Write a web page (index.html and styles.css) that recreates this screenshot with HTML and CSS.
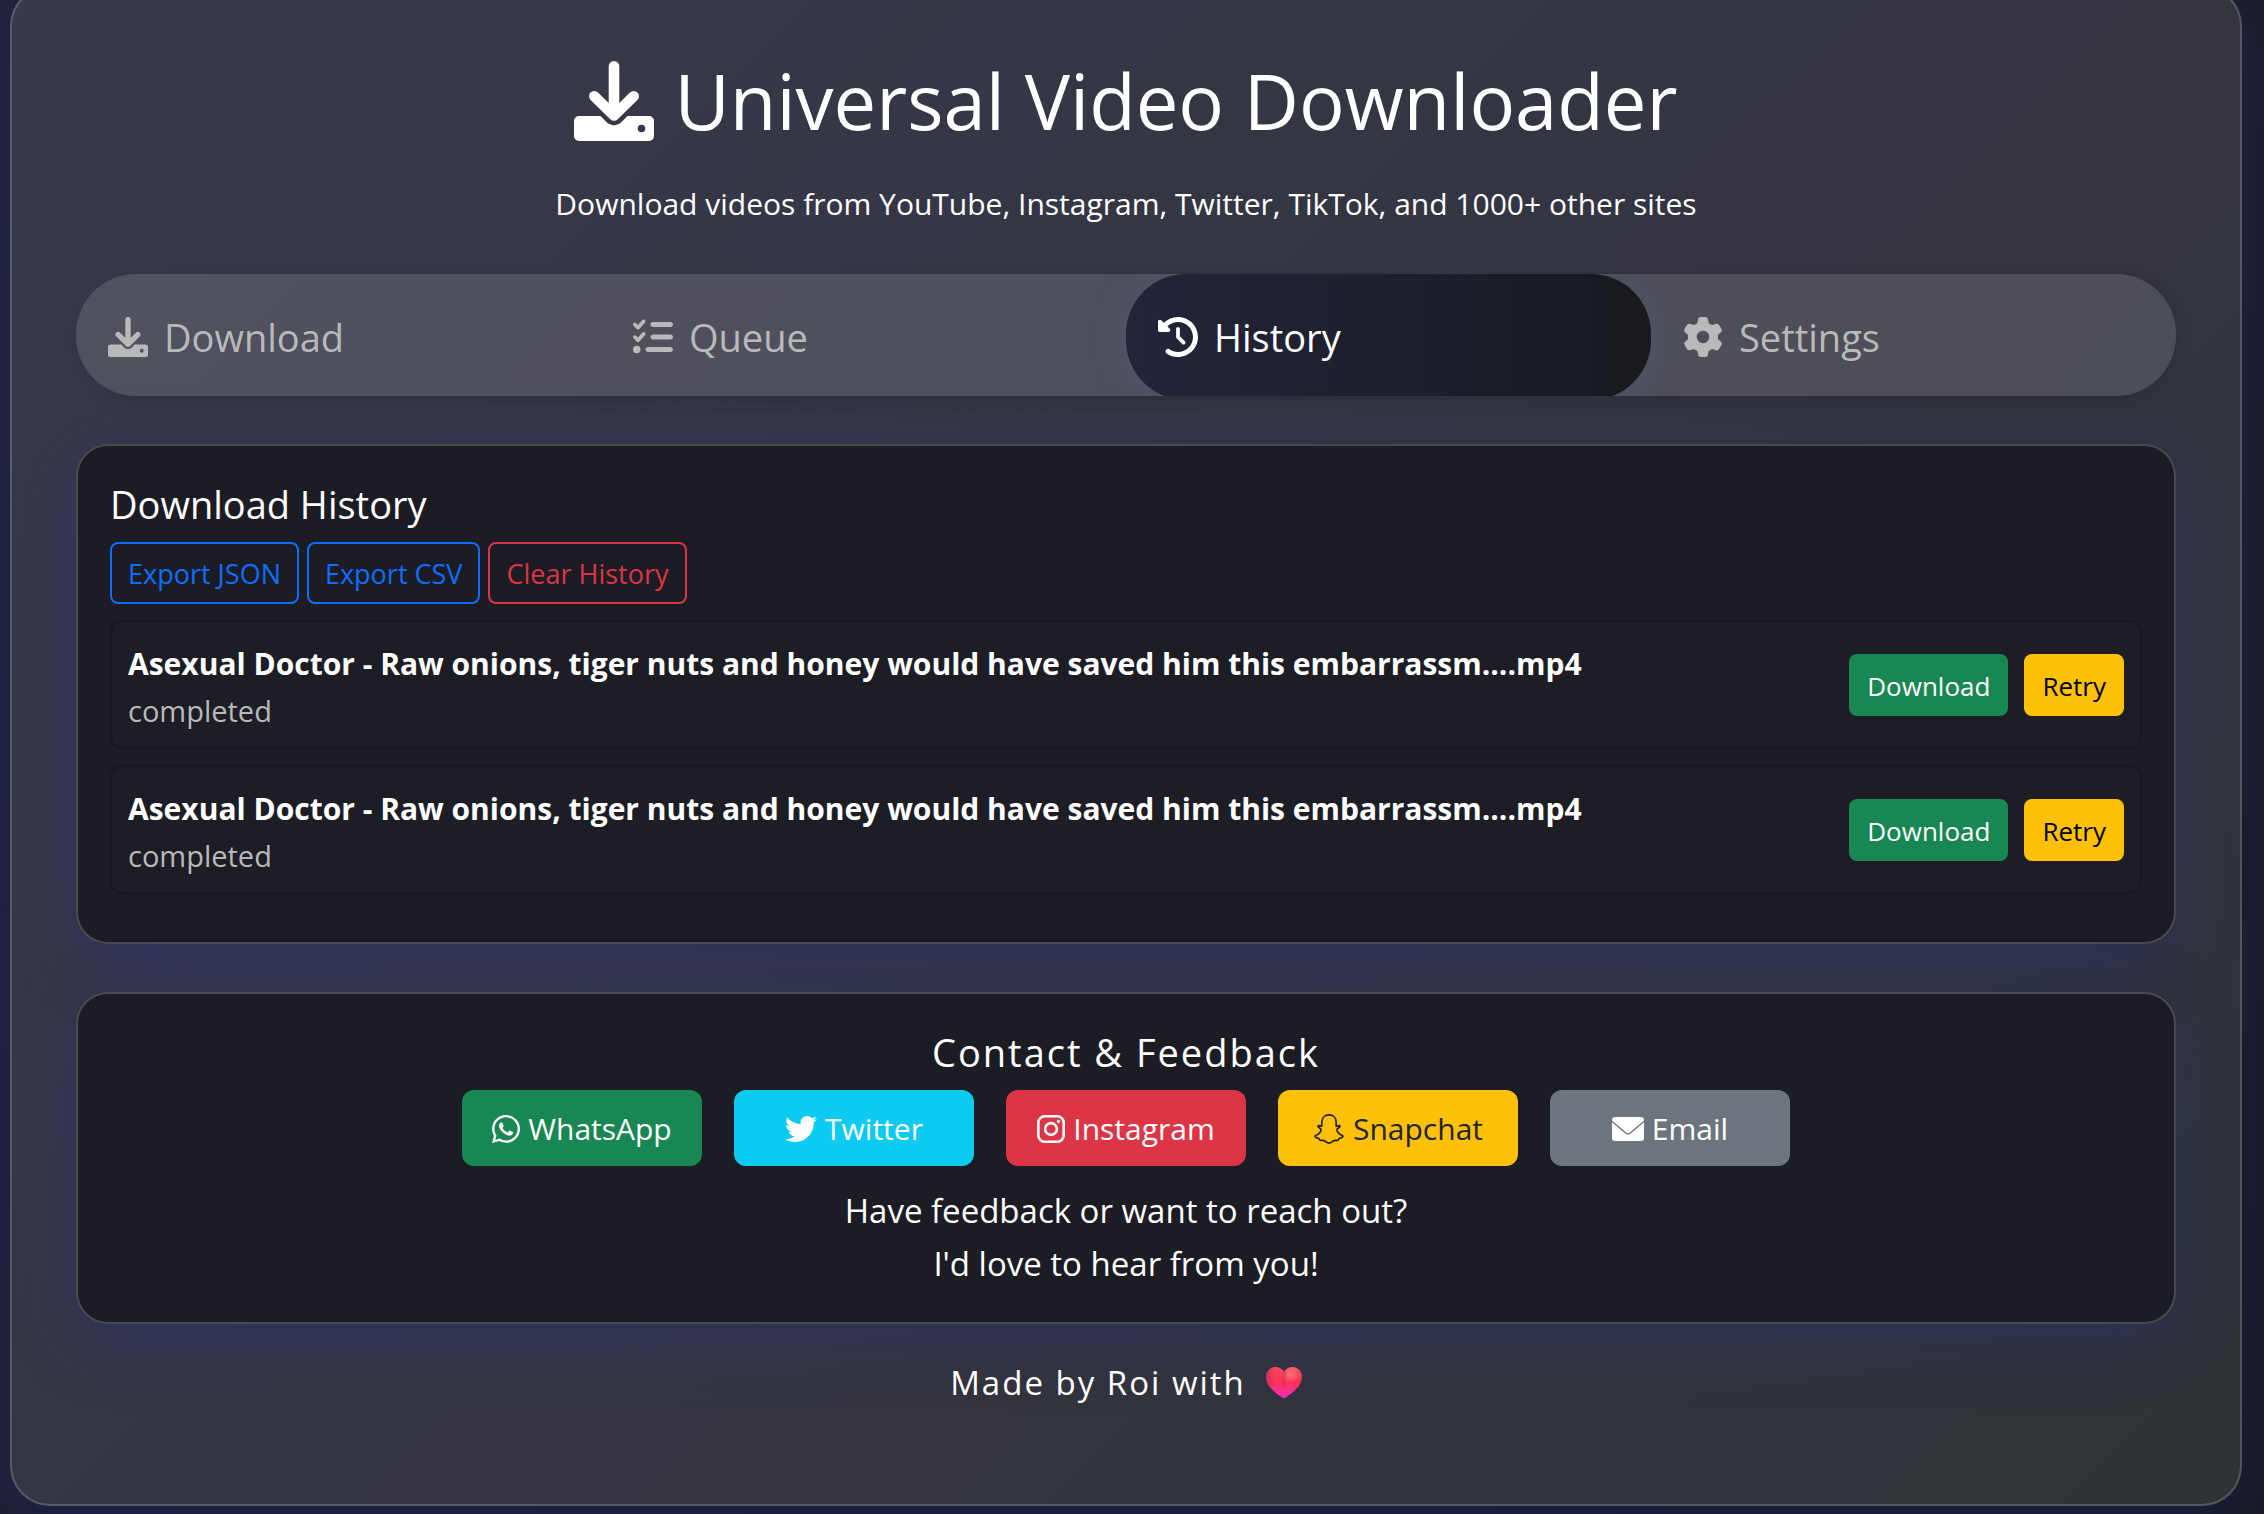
FILE: index.html
```html
<!DOCTYPE html>
<html lang="en">
<head>
<meta charset="utf-8">
<meta name="viewport" content="width=device-width, initial-scale=1">
<title>Universal Video Downloader</title>
<link rel="stylesheet" href="styles.css">
</head>
<body>
<svg class="sprite" aria-hidden="true">
  <symbol id="i-download" viewBox="0 0 80 80">
    <path fill="none" stroke="currentColor" stroke-width="10.6" stroke-linecap="round" stroke-linejoin="round" d="M40 5.300V54.500M20.300 35.300 40 54.500 59.700 35.300"/>
    <path fill="currentColor" fill-rule="evenodd" d="M5 55H26.500L32.500 61C36.700 65.200 43.300 65.200 47.500 61L53.500 55H75a5 5 0 0 1 5 5V75a5 5 0 0 1-5 5H5a5 5 0 0 1-5-5V60a5 5 0 0 1 5-5ZM67.500 63.700a3.800 3.800 0 1 0 0 7.600 3.800 3.800 0 1 0 0-7.600Z"/>
  </symbol>
  <symbol id="i-queue" viewBox="0 0 512 512">
    <path fill="currentColor" d="M152.100 38.200c9.900 8.900 10.700 24 1.800 33.900l-72 80c-4.400 4.900-10.600 7.800-17.200 7.900s-12.900-2.400-17.600-7L7 113C-2.300 103.600-2.300 88.400 7 79s24.600-9.400 33.900 0l22.100 22.100 55.100-61.200c8.900-9.900 24-10.700 33.900-1.800zm0 160c9.900 8.900 10.700 24 1.800 33.900l-72 80c-4.400 4.900-10.600 7.800-17.200 7.900s-12.900-2.400-17.600-7L7 273c-9.400-9.400-9.400-24.600 0-33.900s24.600-9.400 33.900 0l22.100 22.100 55.100-61.200c8.900-9.900 24-10.700 33.900-1.800zM224 96c0-17.700 14.300-32 32-32H480c17.700 0 32 14.300 32 32s-14.300 32-32 32H256c-17.700 0-32-14.300-32-32zm0 160c0-17.700 14.300-32 32-32H480c17.700 0 32 14.300 32 32s-14.300 32-32 32H256c-17.700 0-32-14.300-32-32zM160 416c0-17.700 14.300-32 32-32H480c17.700 0 32 14.300 32 32s-14.300 32-32 32H192c-17.700 0-32-14.300-32-32zM48 368a48 48 0 1 1 0 96 48 48 0 1 1 0-96z"/>
  </symbol>
  <symbol id="i-history" viewBox="0 0 512 512">
    <path fill="currentColor" d="M75 75L41 41C25.900 25.900 0 36.600 0 57.900V168c0 13.300 10.700 24 24 24H134.100c21.400 0 32.100-25.900 17-41l-30.800-30.800C155 85.500 203 64 256 64c106 0 192 86 192 192s-86 192-192 192c-40.800 0-78.600-12.700-109.700-34.400c-14.500-10.100-34.400-6.600-44.600 7.900s-6.600 34.400 7.900 44.600C151.200 495 201.700 512 256 512c141.400 0 256-114.600 256-256S397.400 0 256 0C185.300 0 121.300 28.700 75 75zm181 53c-13.300 0-24 10.700-24 24V256c0 6.400 2.500 12.500 7 17l72 72c9.400 9.400 24.600 9.400 33.900 0s9.400-24.600 0-33.900l-65-65V152c0-13.300-10.700-24-24-24z"/>
  </symbol>
  <symbol id="i-settings" viewBox="0 0 512 512">
    <path fill="currentColor" d="M495.900 166.600c3.200 8.700 .5 18.400-6.400 24.600l-43.300 39.400c1.100 8.300 1.700 16.800 1.700 25.400s-.6 17.100-1.700 25.400l43.300 39.400c6.900 6.200 9.600 15.900 6.400 24.600c-4.400 11.900-9.700 23.300-15.800 34.300l-4.700 8.100c-6.600 11-14 21.400-22.100 31.200c-5.900 7.200-15.700 9.600-24.500 6.800l-55.700-17.700c-13.400 10.300-28.200 18.900-44 25.400l-12.500 57.100c-2 9.100-9 16.300-18.200 17.800c-13.800 2.300-28 3.500-42.500 3.500s-28.700-1.200-42.500-3.500c-9.200-1.500-16.200-8.700-18.200-17.800l-12.500-57.100c-15.800-6.500-30.600-15.100-44-25.400L83.100 425.900c-8.800 2.800-18.600 .3-24.500-6.800c-8.100-9.800-15.500-20.200-22.100-31.200l-4.700-8.100c-6.100-11-11.400-22.400-15.800-34.300c-3.200-8.700-.5-18.400 6.400-24.600l43.300-39.400C64.600 273.100 64 264.600 64 256s.6-17.100 1.700-25.400L22.400 191.200c-6.900-6.200-9.600-15.900-6.400-24.600c4.400-11.900 9.700-23.300 15.800-34.300l4.700-8.100c6.600-11 14-21.400 22.100-31.200c5.900-7.200 15.700-9.600 24.500-6.800l55.700 17.700c13.400-10.300 28.200-18.900 44-25.400l12.500-57.100c2-9.100 9-16.300 18.200-17.800C227.300 1.200 241.500 0 256 0s28.700 1.200 42.500 3.500c9.200 1.500 16.200 8.700 18.200 17.800l12.500 57.100c15.800 6.500 30.600 15.100 44 25.400l55.700-17.700c8.800-2.800 18.600-.3 24.500 6.800c8.100 9.800 15.500 20.200 22.100 31.200l4.700 8.100c6.100 11 11.400 22.400 15.800 34.300zM256 336a80 80 0 1 0 0-160 80 80 0 1 0 0 160z"/>
  </symbol>
  <symbol id="i-whatsapp" viewBox="0 32 448 448">
    <path fill="currentColor" d="M380.900 97.100C339 55.100 283.200 32 223.900 32c-122.400 0-222 99.600-222 222 0 39.100 10.200 77.300 29.600 111L0 480l117.700-30.900c32.400 17.700 68.900 27 106.100 27h.1c122.300 0 224.100-99.600 224.100-222 0-59.300-25.200-115-67.100-157zm-157 341.600c-33.200 0-65.700-8.900-94-25.700l-6.700-4-69.800 18.300L72 359.200l-4.400-7c-18.500-29.400-28.200-63.300-28.200-98.200 0-101.700 82.800-184.500 184.600-184.500 49.300 0 95.600 19.200 130.400 54.100 34.800 34.900 56.200 81.200 56.100 130.500 0 101.800-84.900 184.600-186.600 184.600zm101.200-138.200c-5.500-2.800-32.800-16.200-37.900-18-5.100-1.900-8.800-2.800-12.500 2.800-3.700 5.600-14.300 18-17.600 21.800-3.200 3.700-6.500 4.200-12 1.400-32.600-16.300-54-29.100-75.500-66-5.700-9.800 5.700-9.100 16.300-30.300 1.800-3.700 .9-6.900-.5-9.700-1.400-2.800-12.500-30.100-17.100-41.200-4.500-10.800-9.100-9.300-12.500-9.500-3.200-.2-6.900-.2-10.600-.2-3.700 0-9.700 1.400-14.800 6.900-5.100 5.600-19.400 19-19.400 46.300 0 27.300 19.900 53.700 22.600 57.400 2.800 3.700 39.100 59.700 94.800 83.800 35.200 15.200 49 16.500 66.600 13.900 10.700-1.600 32.800-13.400 37.400-26.400 4.600-13 4.600-24.100 3.200-26.400-1.300-2.500-5-3.900-10.500-6.600z"/>
  </symbol>
  <symbol id="i-twitter" viewBox="0 32 512 448">
    <path fill="currentColor" d="M459.370 151.716c.325 4.548.325 9.097.325 13.645 0 138.720-105.583 298.558-298.558 298.558-59.452 0-114.680-17.219-161.137-47.106 8.447.974 16.568 1.299 25.340 1.299 49.055 0 94.213-16.568 130.274-44.832-46.132-.975-84.792-31.188-98.112-72.772 6.498.974 12.995 1.624 19.818 1.624 9.421 0 18.843-1.300 27.614-3.573-48.081-9.747-84.143-51.980-84.143-102.985v-1.299c13.969 7.797 30.214 12.670 47.431 13.319-28.264-18.843-46.781-51.005-46.781-87.391 0-19.492 5.197-37.360 14.294-52.954 51.655 63.675 129.300 105.258 216.365 109.807-1.624-7.797-2.599-15.918-2.599-24.040 0-57.828 46.782-104.934 104.934-104.934 30.213 0 57.502 12.670 76.670 33.137 23.715-4.548 46.456-13.320 66.599-25.340-7.798 24.366-24.366 44.833-46.132 57.827 21.117-2.273 41.584-8.122 60.426-16.243-14.292 20.791-32.161 39.308-52.628 54.253z"/>
  </symbol>
  <symbol id="i-instagram" viewBox="0 0 28 28">
    <rect x="1.300" y="1.300" width="25.400" height="25.400" rx="6.500" fill="none" stroke="currentColor" stroke-width="2.600"/>
    <circle cx="14" cy="14" r="5.900" fill="none" stroke="currentColor" stroke-width="2.600"/>
    <circle cx="21.500" cy="6.500" r="1.700" fill="currentColor"/>
  </symbol>
  <symbol id="i-snapchat" viewBox="0 0 30 30">
    <path fill="none" stroke="currentColor" stroke-width="1.700" stroke-linejoin="round" d="M15 .9C10.500 .9 7.800 4 7.800 8.200V12C6.500 12.400 5 11 3.900 11.900C3.200 13.300 6.200 14 6.900 15C7.800 17 5 20.500 1.200 21.700C.2 22.800 2.600 24 4.800 24.500C5.600 25 5 26.300 6.400 26.400C8 26.500 9.300 25.900 10.900 27C12.300 28 13.200 29.100 15 29.100C16.800 29.100 17.700 28 19.100 27C20.700 25.900 22 26.500 23.600 26.400C25 26.300 24.400 25 25.200 24.500C27.400 24 29.800 22.800 28.800 21.700C25 20.500 22.200 17 23.100 15C23.800 14 26.800 13.300 26.100 11.900C25 11 23.500 12.400 22.200 12V8.200C22.200 4 19.500 .9 15 .9Z"/>
  </symbol>
  <symbol id="i-email" viewBox="0 0 32 24">
    <path fill="currentColor" d="M3 0H29a3 3 0 0 1 3 3V3.500L17.800 15.600a3 3 0 0 1-3.600 0L0 3.500V3A3 3 0 0 1 3 0Z"/>
    <path fill="currentColor" d="M0 5.200 13.300 16.600a4.200 4.200 0 0 0 5.400 0L32 5.200V21a3 3 0 0 1-3 3H3a3 3 0 0 1-3-3Z"/>
  </symbol>
</svg>

<main class="shell">
  <header class="header">
    <h1 class="title"><svg class="title-icon" aria-hidden="true"><use href="#i-download"/></svg>Universal Video Downloader</h1>
    <p class="subtitle">Download videos from YouTube, Instagram, Twitter, TikTok, and 1000+ other sites</p>
  </header>

  <nav class="tabs" aria-label="Sections">
    <a class="tab" href="#download"><svg class="tab-icon" aria-hidden="true"><use href="#i-download"/></svg>Download</a>
    <a class="tab" href="#queue"><svg class="tab-icon" aria-hidden="true"><use href="#i-queue"/></svg>Queue</a>
    <a class="tab tab-active" href="#history" aria-current="page"><svg class="tab-icon" aria-hidden="true"><use href="#i-history"/></svg>History</a>
    <a class="tab" href="#settings"><svg class="tab-icon" aria-hidden="true"><use href="#i-settings"/></svg>Settings</a>
  </nav>

  <section class="card" id="history">
    <h2 class="card-title">Download History</h2>
    <div class="toolbar">
      <button class="btn btn-outline-blue" type="button">Export JSON</button>
      <button class="btn btn-outline-blue" type="button">Export CSV</button>
      <button class="btn btn-outline-red" type="button">Clear History</button>
    </div>
    <ul class="items">
      <li class="item">
        <div class="item-info">
          <strong class="item-name">Asexual Doctor - Raw onions, tiger nuts and honey would have saved him this embarrassm....mp4</strong>
          <span class="item-status">completed</span>
        </div>
        <div class="item-actions">
          <button class="btn btn-green" type="button">Download</button>
          <button class="btn btn-yellow" type="button">Retry</button>
        </div>
      </li>
      <li class="item">
        <div class="item-info">
          <strong class="item-name">Asexual Doctor - Raw onions, tiger nuts and honey would have saved him this embarrassm....mp4</strong>
          <span class="item-status">completed</span>
        </div>
        <div class="item-actions">
          <button class="btn btn-green" type="button">Download</button>
          <button class="btn btn-yellow" type="button">Retry</button>
        </div>
      </li>
    </ul>
  </section>

  <section class="card contact">
    <h2 class="card-title spaced">Contact &amp; Feedback</h2>
    <div class="socials">
      <a class="social whatsapp" href="#whatsapp"><svg class="icon-28" aria-hidden="true"><use href="#i-whatsapp"/></svg>WhatsApp</a>
      <a class="social twitter" href="#twitter"><svg class="icon-32" aria-hidden="true"><use href="#i-twitter"/></svg>Twitter</a>
      <a class="social instagram" href="#instagram"><svg class="icon-28" aria-hidden="true"><use href="#i-instagram"/></svg>Instagram</a>
      <a class="social snapchat" href="#snapchat"><svg class="icon-32" aria-hidden="true"><use href="#i-snapchat"/></svg>Snapchat</a>
      <a class="social email" href="#email"><svg class="icon-32" aria-hidden="true"><use href="#i-email"/></svg>Email</a>
    </div>
    <p class="note">Have feedback or want to reach out?<br>I'd love to hear from you!</p>
  </section>

  <footer class="footer">Made by Roi with
    <svg class="heart" viewBox="0 0 36 31" role="img" aria-label="love">
      <defs>
        <linearGradient id="heart-fill" x1="0" y1="0" x2="0" y2="1">
          <stop offset="0" stop-color="#f8475b"/>
          <stop offset=".5" stop-color="#fa3157"/>
          <stop offset="1" stop-color="#f52ec0"/>
        </linearGradient>
        <radialGradient id="heart-light" cx=".68" cy=".22" r=".3">
          <stop offset="0" stop-color="#ff7078"/>
          <stop offset="1" stop-color="#ff7078" stop-opacity="0"/>
        </radialGradient>
        <linearGradient id="heart-shade">
          <stop offset="0" stop-color="#b02a58" stop-opacity=".6"/>
          <stop offset=".25" stop-color="#b02a58" stop-opacity="0"/>
          <stop offset=".42" stop-color="#b01f45" stop-opacity="0"/>
          <stop offset=".5" stop-color="#b01f45" stop-opacity=".4"/>
          <stop offset=".58" stop-color="#b01f45" stop-opacity="0"/>
        </linearGradient>
      </defs>
      <path fill="url(#heart-fill)" d="M18 4.500C15.500 1.200 12.500 0 9.500 0C4 0 0 4.300 0 10C0 18.500 8 25 16.200 30.400a3.300 3.300 0 0 0 3.600 0C28 25 36 18.500 36 10C36 4.300 32 0 26.500 0C23.500 0 20.500 1.200 18 4.500Z"/>
      <path fill="url(#heart-light)" d="M18 4.500C15.500 1.200 12.500 0 9.500 0C4 0 0 4.300 0 10C0 18.500 8 25 16.200 30.400a3.300 3.300 0 0 0 3.600 0C28 25 36 18.500 36 10C36 4.300 32 0 26.500 0C23.500 0 20.500 1.200 18 4.500Z"/>
      <path fill="url(#heart-shade)" d="M18 4.500C15.500 1.200 12.500 0 9.500 0C4 0 0 4.300 0 10C0 14 2 17 4 20H32C34 17 36 14 36 10C36 4.300 32 0 26.500 0C23.500 0 20.500 1.200 18 4.500Z"/>
    </svg>
  </footer>
</main>
</body>
</html>
```

FILE: styles.css
```css
* {
  box-sizing: border-box;
}

body {
  display: flex;
  flex-direction: column;
  min-height: 100vh;
  margin: 0;
  padding: 0 22px 8px 10px;
  background: linear-gradient(135deg, #232338, #181b20);
  color: #fff;
  font-family: "Open Sans", "Noto Sans", sans-serif;
  font-size: 30px;
  line-height: 48px;
}

h1,
h2,
p,
ul {
  margin: 0;
  padding: 0;
  font-weight: 400;
}

a {
  text-decoration: none;
}

.sprite {
  display: none;
}

.shell {
  flex: 1;
  margin-top: -14px;
  padding: 64px;
  border: 2px solid rgba(255, 255, 255, .18);
  border-radius: 40px;
  background: rgba(255, 255, 255, .1);
  box-shadow: 0 16px 64px rgba(31, 38, 135, .37);
}

.header {
  margin-bottom: 46px;
  text-align: center;
}

.title {
  display: flex;
  align-items: center;
  justify-content: center;
  gap: 20px;
  margin-bottom: 30px;
  font-size: 76px;
  line-height: 98px;
}

.title-icon {
  width: 80px;
  height: 80px;
}

.tabs {
  display: grid;
  grid-template-columns: repeat(4, 1fr);
  height: 122px;
  margin-bottom: 48px;
  overflow: hidden;
  border-radius: 60px;
  background: rgba(255, 255, 255, .13);
  box-shadow: 0 4px 16px rgba(0, 0, 0, .12);
}

.tab {
  display: flex;
  align-items: center;
  gap: 16px;
  height: 126px;
  padding: 0 32px;
  border-radius: 60px;
  color: #b9b9b9;
  font-size: 38px;
}

.tab-active {
  background: linear-gradient(90deg, #23243a, #181a1f);
  box-shadow: 0 4px 32px rgba(88, 92, 140, .5);
  color: #fff;
}

.tab-icon {
  width: 40px;
  height: 40px;
}

.card {
  margin-bottom: 48px;
  padding: 32px;
  border: 2px solid rgba(255, 255, 255, .2);
  border-radius: 32px;
  background: #1c1c24;
  box-shadow: 0 16px 64px rgba(40, 44, 135, .4);
}

.card-title {
  margin-bottom: 12px;
  font-size: 38px;
  line-height: 52px;
}

.spaced,
.footer {
  letter-spacing: 2px;
}

.toolbar {
  display: flex;
  gap: 8px;
}

.btn {
  height: 62px;
  padding: 2px 16px 0;
  border: 2px solid;
  border-radius: 8px;
  background: none;
  font-family: inherit;
  font-size: 27px;
  line-height: 42px;
}

.btn-outline-blue {
  border-color: #0d6efd;
  color: #0d6efd;
}

.btn-outline-red {
  border-color: #dc3545;
  color: #dc3545;
}

.btn-green {
  border-color: #198754;
  background: #198754;
  color: #fff;
}

.btn-yellow {
  border-color: #ffc107;
  background: #ffc107;
  color: #000;
}

.items {
  list-style: none;
}

.item {
  display: flex;
  align-items: center;
  justify-content: space-between;
  margin: 16px 0;
  padding: 16px;
  border: 2px solid #18181f;
  border-radius: 12px;
  background: #1d1d26;
}

.item-info {
  display: grid;
}

.item-name {
  font-weight: 700;
  line-height: 52px;
}

.item-status {
  color: #b9b9b9;
  font-size: 29px;
  line-height: 41px;
}

.item-actions {
  display: flex;
  gap: 16px;
}

.item-actions .btn {
  font-size: 26px;
}

.contact {
  margin-bottom: 32px;
  text-align: center;
}

.socials {
  display: flex;
  flex-wrap: wrap;
  justify-content: center;
  gap: 32px;
  margin-bottom: 18px;
}

.social {
  display: flex;
  align-items: center;
  justify-content: center;
  gap: 8px;
  width: 240px;
  height: 76px;
  padding-top: 2px;
  border-radius: 12px;
  color: #fff;
}

.icon-28 {
  width: 28px;
  height: 28px;
}

.icon-32 {
  width: 32px;
  height: 30px;
}

.whatsapp {
  background: #198754;
}

.twitter {
  background: #0dcaf0;
}

.instagram {
  background: #dc3545;
}

.snapchat {
  background: #ffc107;
  color: #212529;
}

.email {
  background: #6c757d;
}

.note,
.footer {
  font-size: 33px;
  line-height: 53px;
}

.footer {
  display: flex;
  align-items: center;
  justify-content: center;
  gap: 20px;
}

.heart {
  width: 36px;
  height: 31px;
}
```
